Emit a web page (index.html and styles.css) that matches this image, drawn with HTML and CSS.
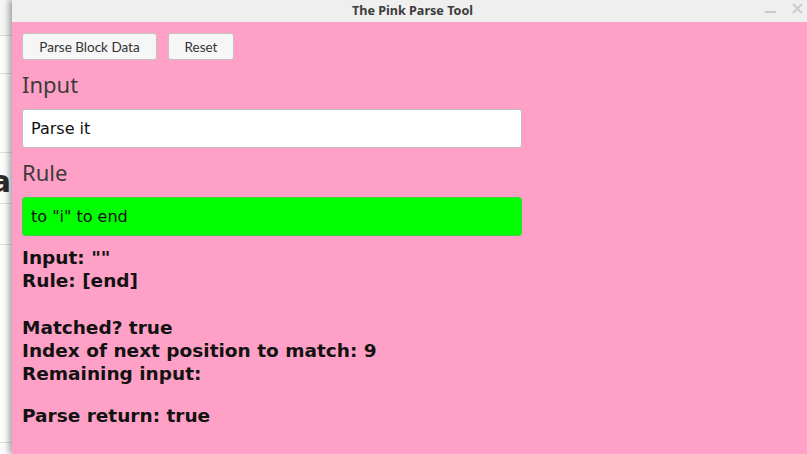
FILE: index.html
```html
<!DOCTYPE html>
<html>
<head>
<meta charset="utf-8">
<title>The Pink Parse Tool</title>
<link rel="stylesheet" href="styles.css">
</head>
<body>
  <div class="behind">
    <div class="brow r1"></div>
    <div class="brow r2"></div>
    <div class="brow r3"></div>
    <div class="brow r4"><span class="bigletter">a</span></div>
    <div class="brow r5"></div>
    <div class="brow r6"></div>
  </div>
  <div class="window">
    <div class="titlebar">
      <div class="tb-side"></div>
      <div class="tb-title">The Pink Parse Tool</div>
      <div class="tb-controls">
        <span class="tb-min"></span>
        <svg class="tb-close" width="11" height="11" viewBox="0 0 11 11"><path d="M1 1 L10 10 M10 1 L1 10" stroke="#c6ced4" stroke-width="2" fill="none"/></svg>
      </div>
    </div>
    <div class="pink">
      <div class="btnrow">
        <button class="btn btn-parse">Parse Block Data</button>
        <button class="btn btn-reset">Reset</button>
      </div>
      <div class="label">Input</div>
      <input class="field field-input" type="text" value="Parse it">
      <div class="label">Rule</div>
      <input class="field field-rule" type="text" value="to &quot;i&quot; to end">
      <div class="output">
        <div class="line">Input: ""</div>
        <div class="line">Rule: [end]</div>
        <div class="line blank"></div>
        <div class="line">Matched? true</div>
        <div class="line">Index of next position to match: 9</div>
        <div class="line">Remaining input:</div>
        <div class="line final">Parse return: true</div>
      </div>
    </div>
  </div>
</body>
</html>
```
FILE: styles.css
```css
html, body {
  margin: 0;
  padding: 0;
}
body {
  width: 807px;
  height: 454px;
  overflow: hidden;
  display: flex;
  background: #fbfbfb;
  font-family: "DejaVu Sans", sans-serif;
}
.behind {
  width: 12px;
  flex: none;
  display: flex;
  flex-direction: column;
  background: #fcfcfc;
  overflow: hidden;
}
.brow {
  flex: none;
  border-bottom: 1px solid #dcdcdc;
  box-sizing: border-box;
}
.r1 { height: 36px; background: #f5f5f5; }
.r2 { height: 38px; }
.r3 { height: 79px; }
.r4 {
  height: 51px;
  display: flex;
  justify-content: flex-end;
  align-items: flex-start;
}
.r5 { height: 41px; }
.r6 { height: 198px; }
.bigletter {
  font-family: "DejaVu Sans", sans-serif;
  font-weight: bold;
  font-size: 30px;
  line-height: 30px;
  color: #2b2b2b;
  margin-top: 14px;
  margin-right: 1px;
}
.window {
  flex: 1;
  display: flex;
  flex-direction: column;
  box-shadow: -3px 0 6px rgba(0, 0, 0, 0.35);
}
.titlebar {
  height: 22px;
  flex: none;
  background: #efefef;
  display: grid;
  grid-template-columns: 1fr auto 1fr;
  padding-left: 6px;
}
.tb-title {
  font-family: "Noto Sans", sans-serif;
  font-weight: bold;
  font-size: 12.6px;
  line-height: 22px;
  color: #3c3c3c;
}
.tb-controls {
  display: flex;
  justify-content: flex-end;
  align-items: flex-start;
  gap: 16px;
  padding-right: 4px;
}
.tb-min {
  display: block;
  width: 11px;
  height: 2px;
  margin-top: 11px;
  background: #c3cbd1;
}
.tb-close {
  display: block;
  margin-top: 3px;
}
.pink {
  flex: 1;
  background: #ffa1c6;
  padding: 11px 10px 0 10px;
}
.btnrow {
  display: flex;
  gap: 11px;
}
.btn {
  height: 27px;
  padding: 0;
  margin: 0;
  background: #f6f6f6;
  border: 1px solid #c2c2c2;
  border-radius: 3px;
  font-family: Lato, sans-serif;
  font-size: 13.5px;
  color: #333333;
}
.btn-parse { width: 135px; }
.btn-reset { width: 66px; }
.label {
  font-family: "Noto Sans", sans-serif;
  font-size: 22px;
  line-height: 30px;
  color: #3b3b3b;
  margin: 9px 0 10px;
}
.field {
  display: block;
  box-sizing: border-box;
  width: 500px;
  height: 39px;
  margin: 0;
  padding: 0 8px;
  border: 1px solid #bdbdbd;
  border-radius: 3px;
  font-family: "DejaVu Sans", sans-serif;
  font-size: 16px;
  color: #111;
  outline: none;
}
.field-input { background: #ffffff; }
.field-rule {
  background: #00ff00;
  border-color: #3fd43f;
}
.output {
  margin-top: 10px;
  font-family: "DejaVu Sans", sans-serif;
  font-weight: bold;
  font-size: 18.5px;
  line-height: 23px;
  color: #121212;
}
.line.blank { height: 24px; }
.line.final { margin-top: 19px; }
```
